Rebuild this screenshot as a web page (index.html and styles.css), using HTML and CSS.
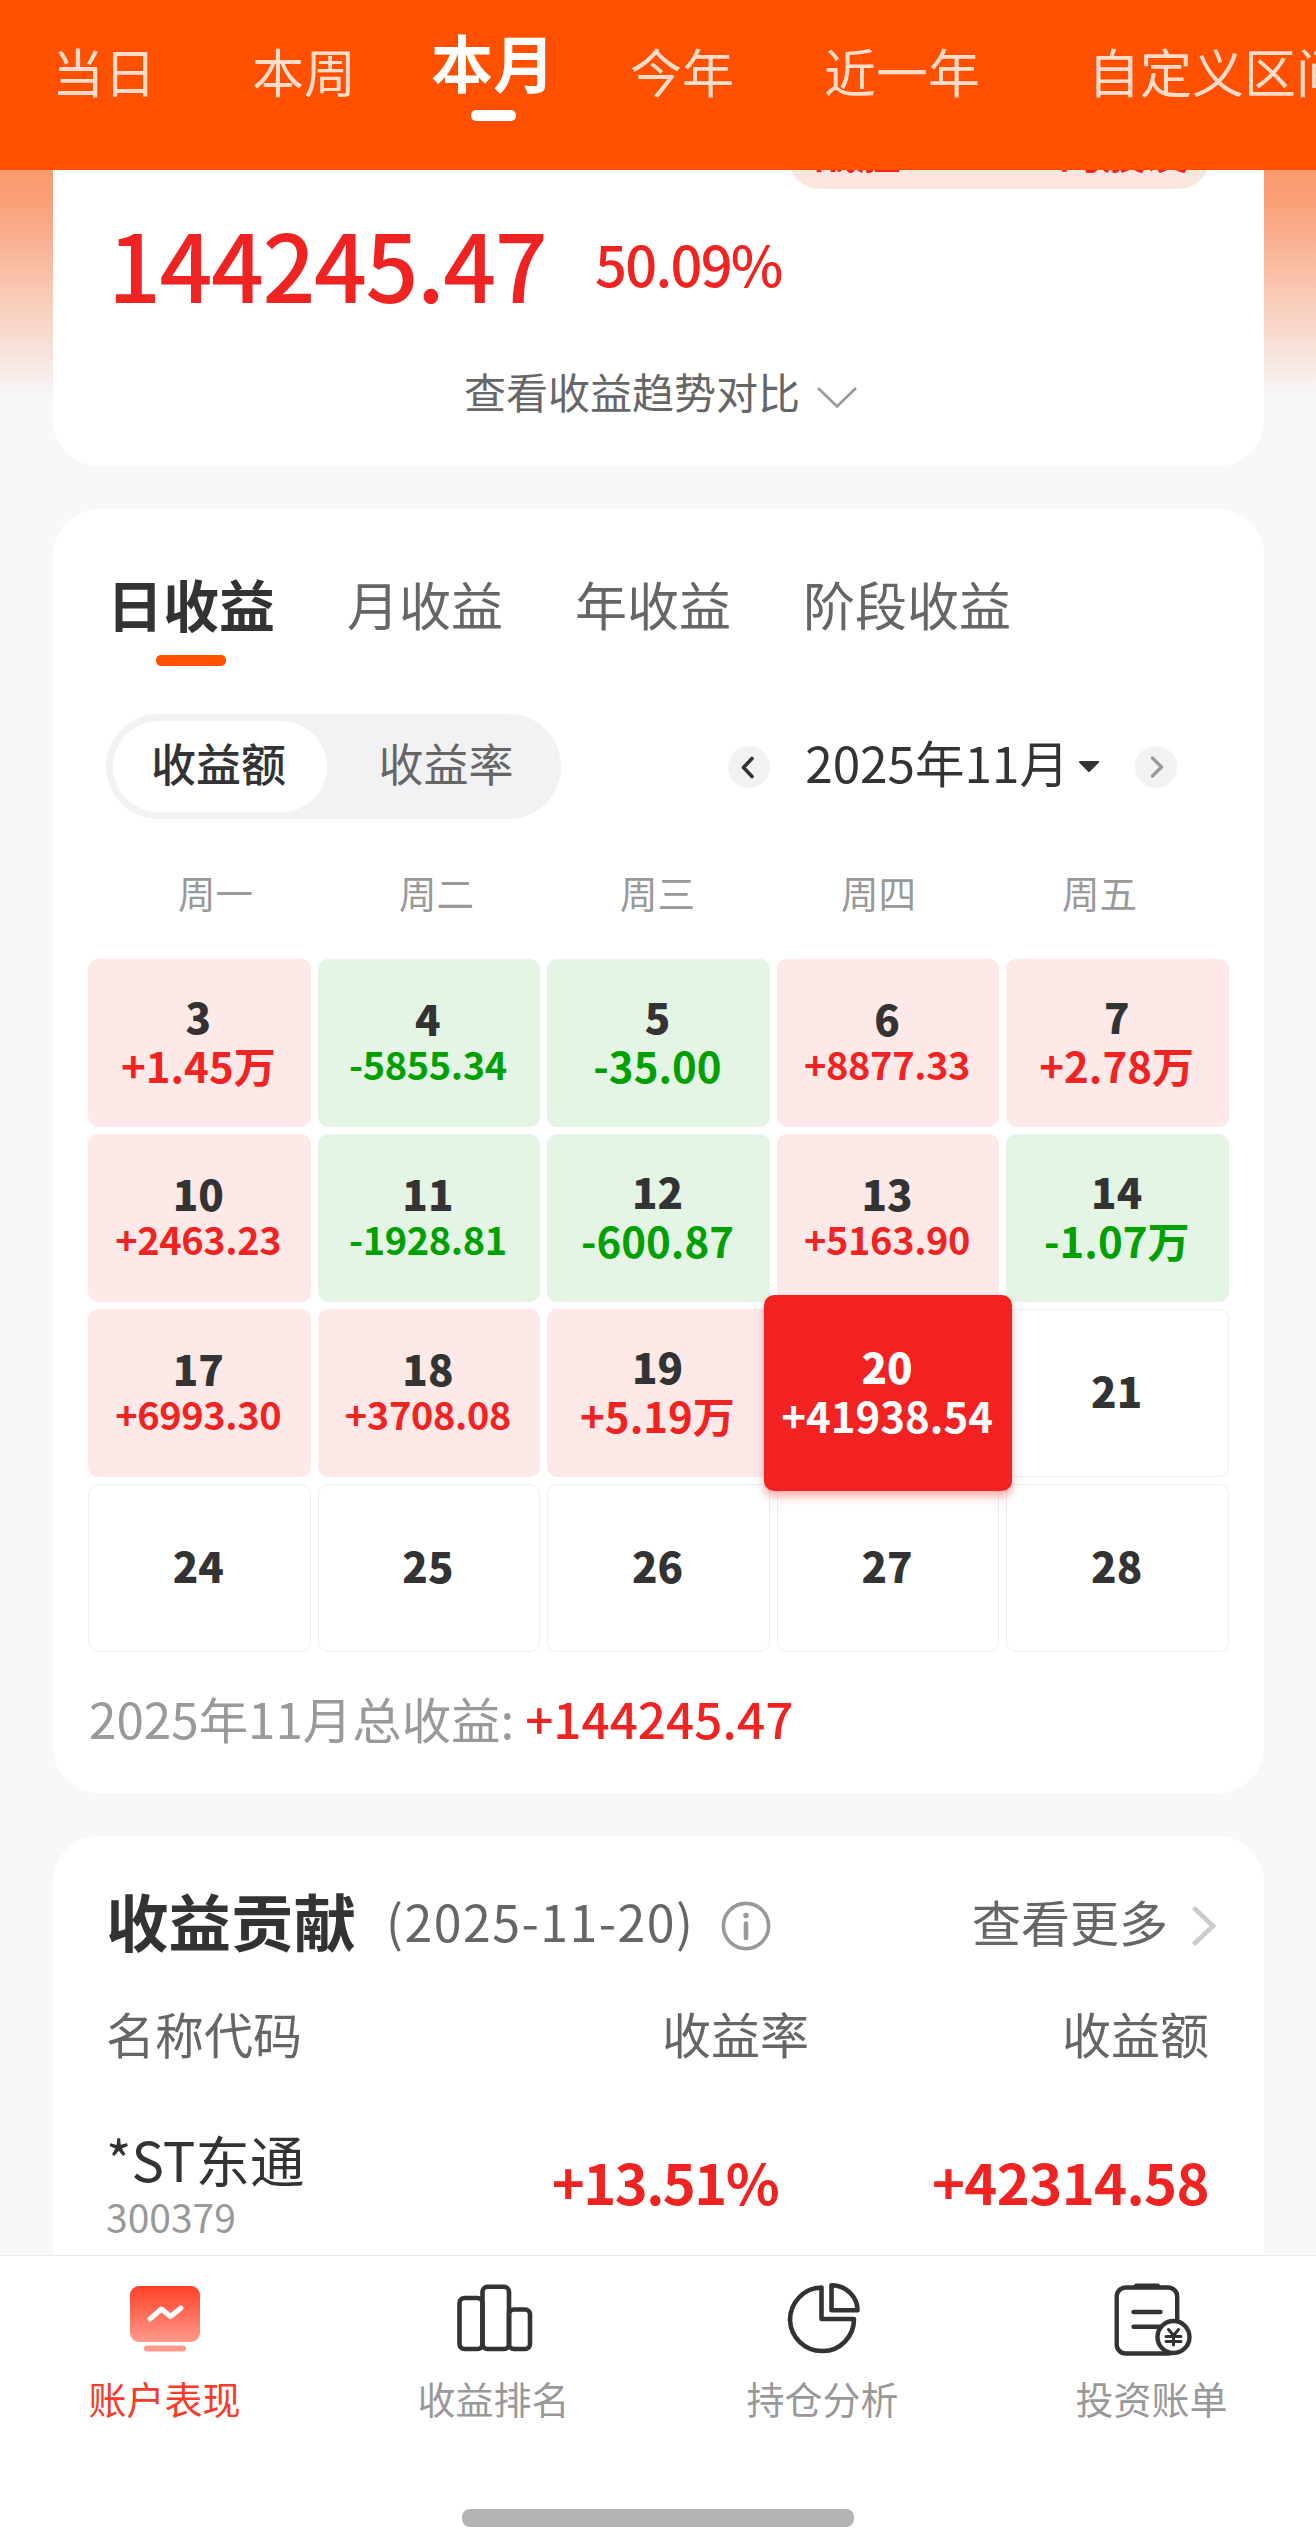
FILE: index.html
```html
<!doctype html>
<html lang="zh-CN">
  <head>
    <meta charset="utf-8">
    <meta name="viewport" content="width=device-width, initial-scale=1">
    <title>账户表现</title>
    <link rel="stylesheet" href="styles.css">
  </head>
  <body>

    <nav class="range-tabs">
      <a class="range">当日</a>
      <a class="range week">本周</a>
      <a class="range month active">本月</a>
      <a class="range year">今年</a>
      <a class="range last-year">近一年</a>
      <a class="range custom">自定义区间</a>
    </nav>

    <main class="content">

      <section class="card summary">
        <div class="badge">战胜99.89%的股友</div>
        <div class="summary-numbers">
          <span class="amount">144245.47</span>
          <span class="percent">50.09%</span>
        </div>
        <div class="compare">
          <span>查看收益趋势对比</span>
          <svg class="compare-arrow" width="42" height="24" viewBox="0 0 42 24">
            <path d="M2 2 L21 20.5 L40 2" fill="none" stroke="#999" stroke-width="2.6"/>
          </svg>
        </div>
      </section>

      <section class="card calendar-card">
        <div class="period-tabs">
          <a class="period active">日收益</a>
          <a class="period">月收益</a>
          <a class="period">年收益</a>
          <a class="period">阶段收益</a>
        </div>

        <div class="toolbar">
          <div class="switch">
            <span class="switch-item active">收益额</span>
            <span class="switch-item">收益率</span>
          </div>
          <div class="month-picker">
            <span class="round-btn">
              <svg width="42" height="42" viewBox="0 0 42 42">
                <path d="M24 12.5 L15.5 21.5 L24 30.5" fill="none" stroke="#333" stroke-width="3.6" stroke-linecap="round" stroke-linejoin="round"/>
              </svg>
            </span>
            <span class="month-label">2025年11月</span>
            <svg class="caret" width="22" height="12" viewBox="0 0 22 12">
              <path d="M2 1 H20 L11 10 Z" fill="#333" stroke="#333" stroke-width="2" stroke-linejoin="round"/>
            </svg>
            <span class="round-btn">
              <svg width="42" height="42" viewBox="0 0 42 42">
                <path d="M17.5 12 L26.5 21 L17.5 30" fill="none" stroke="#999" stroke-width="3.2" stroke-linecap="round" stroke-linejoin="round"/>
              </svg>
            </span>
          </div>
        </div>

        <div class="weekdays">
          <span>周一</span>
          <span>周二</span>
          <span>周三</span>
          <span>周四</span>
          <span>周五</span>
        </div>

        <div class="days">
          <div class="day up"><b>3</b><i>+1.45万</i></div>
          <div class="day down long"><b>4</b><i>-5855.34</i></div>
          <div class="day down"><b>5</b><i>-35.00</i></div>
          <div class="day up long"><b>6</b><i>+8877.33</i></div>
          <div class="day up"><b>7</b><i>+2.78万</i></div>

          <div class="day up long"><b>10</b><i>+2463.23</i></div>
          <div class="day down long"><b>11</b><i>-1928.81</i></div>
          <div class="day down"><b>12</b><i>-600.87</i></div>
          <div class="day up long"><b>13</b><i>+5163.90</i></div>
          <div class="day down"><b>14</b><i>-1.07万</i></div>

          <div class="day up long"><b>17</b><i>+6993.30</i></div>
          <div class="day up long"><b>18</b><i>+3708.08</i></div>
          <div class="day up"><b>19</b><i>+5.19万</i></div>
          <div class="day selected"><b>20</b><i>+41938.54</i></div>
          <div class="day"><b>21</b></div>

          <div class="day"><b>24</b></div>
          <div class="day"><b>25</b></div>
          <div class="day"><b>26</b></div>
          <div class="day"><b>27</b></div>
          <div class="day"><b>28</b></div>
        </div>

        <div class="total">2025年11月总收益: <span class="total-value">+144245.47</span></div>
      </section>

      <section class="card contribution">
        <div class="contribution-head">
          <h2>收益贡献</h2>
          <span class="date">(2025-11-20)</span>
          <svg class="info" width="50" height="50" viewBox="0 0 50 50">
            <circle cx="25" cy="25" r="22.6" fill="none" stroke="#999" stroke-width="3.6"/>
            <circle cx="25" cy="14.5" r="2.7" fill="#999"/>
            <path d="M25 22.5 V37" stroke="#999" stroke-width="4.6" stroke-linecap="round"/>
          </svg>
          <a class="more">查看更多</a>
          <svg class="more-arrow" width="26" height="42" viewBox="0 0 26 42">
            <path d="M2.5 2.5 L22 21 L2.5 39.5" fill="none" stroke="#ccc" stroke-width="4.6"/>
          </svg>
        </div>
        <div class="row labels">
          <span>名称代码</span>
          <span class="rate">收益率</span>
          <span class="money">收益额</span>
        </div>
        <div class="row stock">
          <div>
            <div class="stock-name">*ST东通</div>
            <div class="stock-code">300379</div>
          </div>
          <span class="rate">+13.51%</span>
          <span class="money">+42314.58</span>
        </div>
      </section>

    </main>

    <footer class="tabbar">
      <div class="tabs">
        <a class="tab active">
          <svg width="80" height="80" viewBox="0 0 80 80">
            <defs>
              <linearGradient id="screen" x1="0" y1="0" x2="0" y2="1">
                <stop offset="0" stop-color="#ff4026"/>
                <stop offset="1" stop-color="#ff9a8c"/>
              </linearGradient>
            </defs>
            <rect x="5" y="8" width="70" height="56" rx="9" fill="url(#screen)"/>
            <path d="M25 41 L36.5 31 L45.5 38.5 L56 30" fill="none" stroke="#fff" stroke-width="5" stroke-linecap="round" stroke-linejoin="round"/>
            <rect x="19" y="67.5" width="42" height="6" rx="3" fill="#ff9a8c"/>
          </svg>
          <span>账户表现</span>
        </a>
        <a class="tab">
          <svg width="80" height="80" viewBox="0 0 80 80">
            <g fill="none" stroke="#333" stroke-width="4.6">
              <rect x="5.5" y="20" width="23" height="51" rx="5"/>
              <rect x="28.5" y="8.8" width="26.5" height="62.2" rx="5"/>
              <rect x="55" y="31.5" width="21" height="39.5" rx="5"/>
            </g>
          </svg>
          <span>收益排名</span>
        </a>
        <a class="tab">
          <svg width="80" height="80" viewBox="0 0 80 80">
            <g fill="none" stroke="#333" stroke-width="4.6" stroke-linejoin="round">
              <path d="M38.5 9.5 A32 32 0 1 0 71 41 H38.5 Z"/>
              <path d="M48.5 7.3 V32.3 H74.5 A26 25 0 0 0 48.5 7.3 Z"/>
            </g>
          </svg>
          <span>持仓分析</span>
        </a>
        <a class="tab">
          <svg width="80" height="80" viewBox="0 0 80 80">
            <g fill="none" stroke="#333" stroke-width="4.4" stroke-linecap="round" stroke-linejoin="round">
              <rect x="4.7" y="9.5" width="60.5" height="66" rx="9"/>
              <path d="M21.5 34 H48.5 M21.5 48.7 H50"/>
              <path d="M22 9.5 L24 7 H46 L48 9.5 Z" fill="#333" stroke-width="3"/>
              <circle cx="61.5" cy="59" r="16" fill="#fff"/>
              <path d="M56.5 51.5 L61.5 57.5 L66.5 51.5 M61.5 57.5 V67 M54 58.5 H69 M54 63.5 H69" stroke-width="3"/>
            </g>
          </svg>
          <span>投资账单</span>
        </a>
      </div>
      <div class="home-bar"></div>
    </footer>

  </body>
</html>
```
FILE: styles.css
```css
* {
  box-sizing: border-box;
}

body {
  margin: 0;
  width: 1316px;
  height: 2547px;
  overflow: hidden;
  display: flex;
  flex-direction: column;
  background: #f7f8fa;
  color: #333;
  font-family: "Noto Sans CJK SC", "Noto Sans", sans-serif;
}

/* Orange range bar */
.range-tabs {
  flex: none;
  display: flex;
  height: 170px;
  padding-left: 52px;
  overflow: hidden;
  background: #ff5000;
}
.range {
  flex: none;
  padding-top: 31px;
  font-size: 52px;
  line-height: 80px;
  color: rgba(255, 255, 255, .8);
}
.range.week {
  margin-left: 96px;
}
.range.month {
  margin-left: 75px;
}
.range.year {
  margin-left: 75px;
}
.range.last-year {
  margin-left: 90px;
}
.range.custom {
  margin-left: 108px;
}
.range.active {
  padding-top: 21px;
  font-size: 62px;
  font-weight: bold;
  color: #fff;
}
.range.active::after {
  content: "";
  display: block;
  width: 45px;
  height: 11px;
  margin: 9px auto 0;
  border-radius: 5px;
  background: #fff;
}

.content {
  flex: 1;
  min-height: 0;
  overflow: hidden;
  display: flex;
  flex-direction: column;
  gap: 43px;
  padding: 0 52px 0 53px;
  background: linear-gradient(#fb9a6e, #fa9f78 30px, #f7f8fa 230px);
}
.card {
  flex: none;
  border-radius: 46px;
  background: #fff;
}

/* Summary, scrolled half under the bar */
.summary {
  height: 296px;
  overflow: hidden;
  display: flex;
  flex-direction: column;
  border-radius: 0 0 46px 46px;
}
.badge {
  align-self: flex-end;
  width: 422px;
  height: 64px;
  margin: -45px 54px 0 0;
  padding-left: 5px;
  border-radius: 32px;
  background: #fae6df;
  color: #f02323;
  font-size: 43.5px;
  font-weight: bold;
  line-height: 51px;
  text-align: center;
  white-space: nowrap;
}
.summary-numbers {
  display: flex;
  align-items: center;
  height: 134px;
  margin-top: 7px;
  padding-left: 55px;
  color: #f02323;
  font-weight: 500;
}
.amount {
  width: 487px;
  font-size: 93px;
  line-height: 134px;
  letter-spacing: -1.5px;
}
.percent {
  font-size: 56px;
  line-height: 138px;
  letter-spacing: -1.7px;
}
.compare {
  display: flex;
  align-items: center;
  margin-top: 31px;
  padding-left: 411px;
  color: #666;
  font-size: 42px;
  line-height: 60px;
}
.compare-arrow {
  margin: 13px 0 0 16px;
}

/* Calendar */
.calendar-card {
  height: 1284px;
  padding: 55px 35px 0;
}
.period-tabs {
  display: flex;
  height: 104px;
  padding-left: 19px;
  gap: 72px;
}
.period {
  font-size: 52px;
  line-height: 80px;
  color: #666;
}
.period.active {
  font-size: 56px;
  font-weight: bold;
  line-height: 78px;
  color: #333;
}
.period.active::after {
  content: "";
  display: block;
  width: 70px;
  height: 11px;
  margin: 13px auto 0;
  border-radius: 5px;
  background: #ff5000;
}
.toolbar {
  display: flex;
  justify-content: space-between;
  align-items: center;
  margin-top: 46px;
  padding: 0 52px 0 18px;
}
.switch {
  display: flex;
  width: 455px;
  height: 105px;
  padding: 7px;
  border-radius: 53px;
  background: #f2f2f4;
  font-size: 45px;
  line-height: 84px;
  text-align: center;
}
.switch-item {
  width: 214px;
  height: 91px;
  color: #666;
}
.switch-item:last-child {
  margin-left: 12px;
}
.switch-item.active {
  padding-right: 3px;
  border-radius: 46px;
  background: #fff;
  color: #333;
  font-weight: 500;
}
.month-picker {
  display: flex;
  align-items: center;
}
.round-btn {
  width: 42px;
  height: 42px;
  border-radius: 50%;
  background: #f2f2f4;
}
.round-btn svg {
  display: block;
}
.month-label {
  margin: -9px 9px 0 35px;
  font-size: 49.5px;
  line-height: 70px;
}
.caret {
  margin-right: 35px;
}
.weekdays {
  display: grid;
  grid-template-columns: repeat(5, 221px);
  margin-top: 45px;
  padding-left: 17px;
  color: #999;
  font-size: 37.5px;
  line-height: 56px;
  text-align: center;
}
.days {
  display: grid;
  grid-template-columns: repeat(5, 1fr);
  grid-auto-rows: 168px;
  gap: 7px;
  margin-top: 39px;
}
.day {
  display: flex;
  flex-direction: column;
  align-items: center;
  justify-content: center;
  padding: 0 2px 7px 0;
  border: 1px solid #eee;
  border-radius: 10px;
  font-size: 42px;
  font-weight: bold;
  line-height: 49px;
  white-space: nowrap;
}
.day i {
  font-style: normal;
}
.day.long i {
  font-size: 38px;
  line-height: 44px;
  letter-spacing: -.4px;
}
.day.up {
  border-color: #fde9e8;
  background: #fde9e8;
}
.day.up i {
  color: #f02323;
}
.day.down {
  border-color: #e4f4e5;
  background: #e4f4e5;
}
.day.down i {
  color: #00a000;
}
/* The picked day grows over its neighbours */
.day.selected {
  z-index: 1;
  margin: -14px -13px;
  border: 0;
  background: #f32222;
  box-shadow: 0 6px 8px rgba(243, 34, 34, .35);
  color: #fff;
}
.total {
  margin-top: 30px;
  padding-left: 1px;
  color: #999;
  font-size: 49.4px;
  line-height: 72px;
}
.total-value {
  color: #f02323;
  font-weight: 500;
}

/* Contribution list */
.contribution {
  height: 460px;
  padding: 39px 55px 0 53px;
}
.contribution-head {
  display: flex;
  align-items: center;
  height: 90px;
}
h2 {
  margin: 0;
  font-size: 62.5px;
  line-height: 84px;
}
.date {
  margin-left: 30px;
  color: #666;
  font-size: 50px;
  letter-spacing: 1.5px;
}
.info {
  margin: 11px 0 0 26px;
}
.more {
  margin-left: auto;
  color: #666;
  font-size: 49px;
}
.more-arrow {
  margin: 12px -8px 0 23px;
}
.row {
  display: grid;
  grid-template-columns: 300px 1fr 400px;
}
.rate,
.money {
  text-align: right;
}
.labels {
  margin-top: 32px;
  color: #666;
  font-size: 49px;
  line-height: 72px;
}
.stock {
  align-items: center;
  margin-top: 53px;
}
.stock-name {
  font-size: 54.5px;
  line-height: 74px;
}
.stock-code {
  color: #999;
  font-size: 39px;
  line-height: 40px;
}
.stock .rate,
.stock .money {
  padding-top: 3px;
  color: #f02323;
  font-size: 56px;
  font-weight: bold;
  line-height: 70px;
  letter-spacing: -.6px;
}
.stock .rate {
  padding-right: 31px;
  letter-spacing: -1.6px;
}

/* Bottom bar */
.tabbar {
  flex: none;
  height: 292px;
  border-top: 1px solid #eaeaea;
  background: #fff;
}
.tabs {
  display: grid;
  grid-template-columns: repeat(4, 1fr);
  padding-top: 22px;
}
.tab {
  display: flex;
  flex-direction: column;
  align-items: center;
  gap: 14px;
  color: #999;
  font-size: 38px;
  line-height: 52px;
}
.tab.active {
  color: #f43c28;
}
.home-bar {
  width: 392px;
  height: 18px;
  margin: 85px auto 0;
  border-radius: 8px;
  background: #b3b3b3;
}
```
